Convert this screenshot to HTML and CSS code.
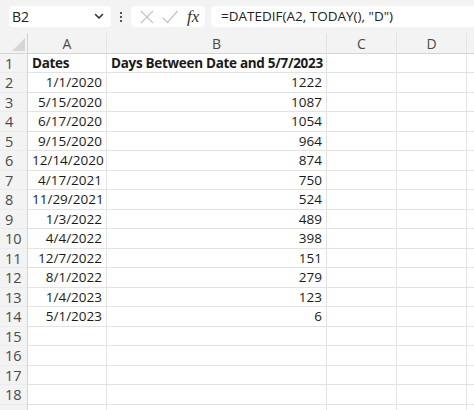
FILE: index.html
```html
<!DOCTYPE html>
<html lang="en">
<head>
    <meta charset="UTF-8">
    <title>DATEDIF sheet</title>
    <link rel="stylesheet" href="styles.css">
</head>
<body>
    <div class="formula-bar">
        <div class="name-box">
            <span>B2</span>
            <svg class="chevron" width="10" height="7" viewBox="0 0 10 7"><path d="M1.5 1.5 5 5l3.5-3.5" fill="none" stroke="#333" stroke-width="1.6" stroke-linecap="round" stroke-linejoin="round"/></svg>
        </div>
        <div class="dots"><i></i><i></i><i></i></div>
        <div class="fx-box">
            <svg width="16" height="16" viewBox="0 0 16 16"><path d="M2 2l12 12M14 2 2 14" stroke="#c4c4c4" stroke-width="1.2" fill="none"/></svg>
            <svg width="18" height="16" viewBox="0 0 18 16"><path d="M1.5 8.5 6.5 13.5 16.5 2" stroke="#c4c4c4" stroke-width="1.2" fill="none"/></svg>
            <span class="fx">fx</span>
        </div>
        <div class="formula-input">=DATEDIF(A2, TODAY(), "D")</div>
    </div>

    <div class="sheet">
        <div class="corner"><span class="tri"></span></div>
        <div class="col-head">A</div>
        <div class="col-head">B</div>
        <div class="col-head">C</div>
        <div class="col-head">D</div>
        <div class="col-head"></div>

        <div class="row-head">1</div><div class="cell bold">Dates</div><div class="cell bold">Days Between Date and 5/7/2023</div><div class="cell"></div><div class="cell"></div><div class="cell"></div>
        <div class="row-head">2</div><div class="cell num">1/1/2020</div><div class="cell num">1222</div><div class="cell"></div><div class="cell"></div><div class="cell"></div>
        <div class="row-head">3</div><div class="cell num">5/15/2020</div><div class="cell num">1087</div><div class="cell"></div><div class="cell"></div><div class="cell"></div>
        <div class="row-head">4</div><div class="cell num">6/17/2020</div><div class="cell num">1054</div><div class="cell"></div><div class="cell"></div><div class="cell"></div>
        <div class="row-head">5</div><div class="cell num">9/15/2020</div><div class="cell num">964</div><div class="cell"></div><div class="cell"></div><div class="cell"></div>
        <div class="row-head">6</div><div class="cell num">12/14/2020</div><div class="cell num">874</div><div class="cell"></div><div class="cell"></div><div class="cell"></div>
        <div class="row-head">7</div><div class="cell num">4/17/2021</div><div class="cell num">750</div><div class="cell"></div><div class="cell"></div><div class="cell"></div>
        <div class="row-head">8</div><div class="cell num">11/29/2021</div><div class="cell num">524</div><div class="cell"></div><div class="cell"></div><div class="cell"></div>
        <div class="row-head">9</div><div class="cell num">1/3/2022</div><div class="cell num">489</div><div class="cell"></div><div class="cell"></div><div class="cell"></div>
        <div class="row-head">10</div><div class="cell num">4/4/2022</div><div class="cell num">398</div><div class="cell"></div><div class="cell"></div><div class="cell"></div>
        <div class="row-head">11</div><div class="cell num">12/7/2022</div><div class="cell num">151</div><div class="cell"></div><div class="cell"></div><div class="cell"></div>
        <div class="row-head">12</div><div class="cell num">8/1/2022</div><div class="cell num">279</div><div class="cell"></div><div class="cell"></div><div class="cell"></div>
        <div class="row-head">13</div><div class="cell num">1/4/2023</div><div class="cell num">123</div><div class="cell"></div><div class="cell"></div><div class="cell"></div>
        <div class="row-head">14</div><div class="cell num">5/1/2023</div><div class="cell num">6</div><div class="cell"></div><div class="cell"></div><div class="cell"></div>
        <div class="row-head">15</div><div class="cell"></div><div class="cell"></div><div class="cell"></div><div class="cell"></div><div class="cell"></div>
        <div class="row-head">16</div><div class="cell"></div><div class="cell"></div><div class="cell"></div><div class="cell"></div><div class="cell"></div>
        <div class="row-head">17</div><div class="cell"></div><div class="cell"></div><div class="cell"></div><div class="cell"></div><div class="cell"></div>
        <div class="row-head">18</div><div class="cell"></div><div class="cell"></div><div class="cell"></div><div class="cell"></div><div class="cell"></div>
        <div class="row-head"></div><div class="cell"></div><div class="cell"></div><div class="cell"></div><div class="cell"></div><div class="cell"></div>
    </div>
</body>
</html>
```

FILE: styles.css
```css
:root {
    --chrome-bg: #f3f3f3;
    --grid-line: #e3e3e3;
    --head-line: #d4d4d4;
    --text-color: #1a1a1a;
    --head-text: #4a4a4a;
}
body {
    margin: 0;
    width: 474px;
    height: 410px;
    overflow: hidden;
    background: #fff;
    font-family: 'Open Sans', 'Noto Sans', sans-serif;
    color: var(--text-color);
}
.formula-bar {
    display: flex;
    align-items: center;
    height: 33px;
    padding: 0 0 0 9px;
    box-sizing: border-box;
    background: var(--chrome-bg);
}
.name-box {
    display: flex;
    align-items: center;
    justify-content: space-between;
    width: 102px;
    height: 21px;
    padding: 0 7px 0 3px;
    box-sizing: border-box;
    background: #fff;
    border-radius: 4px;
    font-size: 14px;
    color: #222;
}
.dots {
    display: flex;
    flex-direction: column;
    gap: 2px;
    margin: 0 9px 0 9px;
}
.dots i {
    display: block;
    width: 2px;
    height: 2px;
    background: #555;
}
.fx-box {
    display: flex;
    align-items: center;
    gap: 6px;
    width: 74px;
    height: 21px;
    padding: 0 4px 0 8px;
    box-sizing: border-box;
    background: #fff;
    border-radius: 4px;
}
.fx {
    margin-left: 2px;
    font-family: 'Liberation Serif', serif;
    font-style: italic;
    font-size: 17px;
    color: #333;
}
.formula-input {
    flex: 1;
    height: 21px;
    margin-left: 6px;
    padding-left: 10px;
    background: #fff;
    border-radius: 4px 0 0 4px;
    font-size: 13.5px;
    line-height: 21px;
    color: #222;
}
.sheet {
    display: grid;
    grid-template-columns: 28px 79px 220px 70px 70px 1fr;
    grid-template-rows: 20.5px repeat(18, 19.5px) 19.5px;
}
.corner {
    position: relative;
    background: var(--chrome-bg);
    border-right: 1px solid var(--head-line);
    border-bottom: 1px solid var(--head-line);
}
.corner .tri {
    position: absolute;
    right: 2px;
    bottom: 2px;
    width: 0;
    height: 0;
    border-left: 13px solid transparent;
    border-bottom: 13px solid #d6d6d6;
}
.col-head {
    background: var(--chrome-bg);
    border-right: 1px solid var(--grid-line);
    border-bottom: 1px solid var(--head-line);
    text-align: center;
    font-size: 14px;
    line-height: 21px;
    color: var(--head-text);
}
.row-head {
    background: var(--chrome-bg);
    border-right: 1px solid var(--head-line);
    border-bottom: 1px solid #ececec;
    padding-left: 5px;
    font-size: 14.5px;
    line-height: 19px;
    color: var(--head-text);
}
.cell {
    border-right: 1px solid var(--grid-line);
    border-bottom: 1px solid var(--grid-line);
    padding: 0 4px;
    font-size: 13.5px;
    line-height: 19.5px;
    white-space: nowrap;
    overflow: visible;
}
.cell.num {
    text-align: right;
}
.cell.bold {
    font-weight: 700;
    letter-spacing: -0.3px;
}
```
